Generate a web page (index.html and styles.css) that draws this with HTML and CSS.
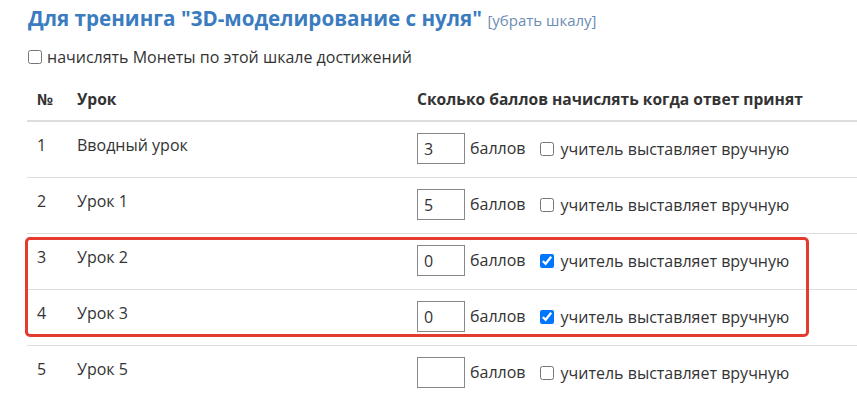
FILE: index.html
```html
<!DOCTYPE html>
<html lang="ru">
<head>
<meta charset="utf-8">
<link rel="stylesheet" href="styles.css">
</head>
<body>
<div class="page">
  <h2 class="title">Для тренинга "3D-моделирование с нуля" <a class="remove" href="#">[убрать шкалу]</a></h2>
  <label class="coins"><input type="checkbox"> начислять Монеты по этой шкале достижений</label>
  <div class="table-wrap">
    <table class="scale">
      <thead>
        <tr><th class="c-num">№</th><th class="c-lesson">Урок</th><th class="c-points">Сколько баллов начислять когда ответ принят</th></tr>
      </thead>
      <tbody>
        <tr><td class="c-num"><div class="cell">1</div></td><td class="c-lesson"><div class="cell">Вводный урок</div></td><td class="c-points"><div class="pts"><input class="num" type="text" value="3"><span class="unit">баллов</span><label class="manual"><input type="checkbox"> учитель выставляет вручную</label></div></td></tr>
        <tr><td class="c-num"><div class="cell">2</div></td><td class="c-lesson"><div class="cell">Урок 1</div></td><td class="c-points"><div class="pts"><input class="num" type="text" value="5"><span class="unit">баллов</span><label class="manual"><input type="checkbox"> учитель выставляет вручную</label></div></td></tr>
        <tr><td class="c-num"><div class="cell">3</div></td><td class="c-lesson"><div class="cell">Урок 2</div></td><td class="c-points"><div class="pts"><input class="num" type="text" value="0"><span class="unit">баллов</span><label class="manual"><input type="checkbox" checked> учитель выставляет вручную</label></div></td></tr>
        <tr><td class="c-num"><div class="cell">4</div></td><td class="c-lesson"><div class="cell">Урок 3</div></td><td class="c-points"><div class="pts"><input class="num" type="text" value="0"><span class="unit">баллов</span><label class="manual"><input type="checkbox" checked> учитель выставляет вручную</label></div></td></tr>
        <tr><td class="c-num"><div class="cell">5</div></td><td class="c-lesson"><div class="cell">Урок 5</div></td><td class="c-points"><div class="pts"><input class="num" type="text" value=""><span class="unit">баллов</span><label class="manual"><input type="checkbox"> учитель выставляет вручную</label></div></td></tr>
      </tbody>
    </table>
    <div class="highlight"></div>
  </div>
</div>
</body>
</html>
```
FILE: styles.css
```css
html, body {
  margin: 0;
  padding: 0;
  background: #fff;
  overflow: hidden;
}
body {
  font-family: "Open Sans", Lato, "Liberation Sans", sans-serif;
  color: #333;
  font-size: 16px;
}
.page {
  padding: 6px 0 0 27px;
}
.title {
  margin: 0;
  font-size: 20.6px;
  line-height: 24px;
  font-weight: 700;
  color: #3a7cbf;
  padding-left: 1px;
}
.remove {
  font-size: 15px;
  font-weight: 400;
  color: #6b8db3;
  text-decoration: none;
}
.coins {
  display: flex;
  align-items: center;
  gap: 5px;
  margin-top: 14px;
  height: 22px;
}
.coins input {
  margin: 0 0 0 1px;
  width: 14px;
  height: 14px;
}
.table-wrap {
  position: relative;
  margin-top: 10px;
}
.scale {
  border-collapse: collapse;
  width: 840px;
}
.scale th {
  text-align: left;
  font-weight: 700;
  font-size: 15.6px;
  height: 42px;
  padding: 0 10px;
  vertical-align: middle;
  border-bottom: 2px solid #ddd;
}
.scale td {
  padding: 0 10px;
  vertical-align: top;
  border-top: 1px solid #ddd;
}
.scale tbody tr:first-child td {
  border-top: none;
}
.c-num { width: 20px; }
.c-lesson { width: 320px; }
.cell {
  height: 55px;
  box-sizing: border-box;
  padding-top: 13px;
  line-height: 20px;
}
.pts {
  display: flex;
  height: 55px;
  box-sizing: border-box;
  padding-top: 11px;
  align-items: flex-start;
}
.num {
  box-sizing: border-box;
  width: 48px;
  height: 31px;
  border: 1px solid #888;
  border-radius: 0;
  padding: 0 6px;
  font: inherit;
  color: #333;
  margin: 0;
}
.unit {
  margin-left: 5px;
  line-height: 31px;
}
.manual {
  display: flex;
  align-items: center;
  gap: 7px;
  margin-left: 14px;
  height: 31px;
}
.manual input {
  margin: 0;
  width: 14px;
  height: 14px;
}
.highlight {
  position: absolute;
  left: -2px;
  top: 159px;
  width: 778px;
  height: 94px;
  border: 3px solid #e53a2f;
  border-radius: 5px;
  pointer-events: none;
}
```
